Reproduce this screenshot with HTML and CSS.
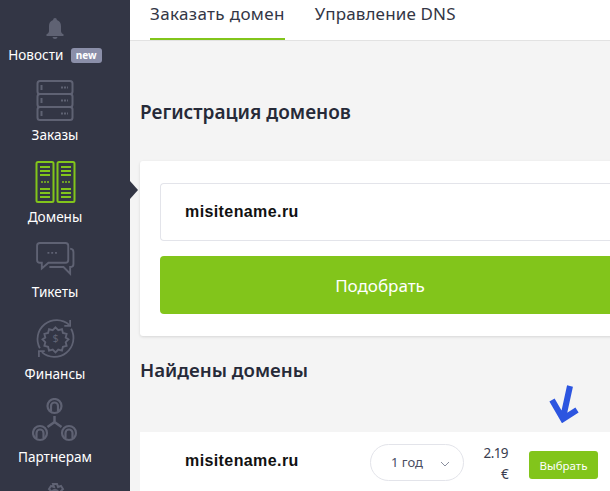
FILE: index.html
```html
<!DOCTYPE html>
<html lang="ru">
<head>
<meta charset="utf-8">
<title>Домены</title>
<link rel="stylesheet" href="styles.css">
</head>
<body>
<div class="app">
  <nav class="side">
    <a class="item news">
      <svg class="ic bell" width="18" height="21" viewBox="0 0 18 21"><path fill="#5f6273" d="M9 0c1.200 0 1.800.9 1.900 2C13.700 2.900 15 5.200 15 8v5c0 1.500 1 2.700 2.500 3.300V18H.5v-1.700C2 15.700 3 14.500 3 13V8c0-2.800 1.300-5.100 4.100-6C7.200.9 7.800 0 9 0z"/><path fill="#5f6273" d="M6.500 19h5C11.300 20.300 10.300 21 9 21s-2.300-.7-2.500-2z"/></svg>
      <span class="lab">Новости <em class="new">new</em></span>
    </a>
    <a class="item orders">
      <svg class="ic" width="38" height="41" viewBox="0 0 38 41" fill="none" stroke="#5f6273" stroke-width="2"><rect x="1.500" y="1" width="35" height="13" rx="2.500"/><rect x="1.500" y="14" width="35" height="13" rx="2.500"/><rect x="1.500" y="27" width="35" height="13" rx="2.500"/><path d="M5.500 5v5M5.500 18v5M5.500 31v5"/><path stroke-dasharray="2 1" d="M25 7.500h7M25 20.500h7M25 33.500h7"/></svg>
      <span class="lab">Заказы</span>
    </a>
    <a class="item dom">
      <svg class="ic" width="41" height="42" viewBox="0 0 41 42" fill="none" stroke="#82c51b" stroke-width="2"><rect x="1.500" y="1" width="17" height="40" rx="1.500"/><rect x="22.500" y="1" width="17" height="40" rx="1.500"/><path d="M5 6h10M5 10h10M5 14h10M26 6h10M26 10h10M26 14h10M5 28h10M5 32h10M5 36h10M26 28h10M26 32h10M26 36h10"/><path stroke-dasharray="2 1" stroke-width="1.500" d="M6 21h8M27 21h8"/></svg>
      <span class="lab">Домены</span>
    </a>
    <a class="item tick">
      <svg class="ic" width="41" height="34" viewBox="0 0 41 36" fill="none" stroke="#5f6273" stroke-width="2"><path d="M4 1h27a3 3 0 0 1 3 3v15a3 3 0 0 1-3 3H13l-7 6v-6H4a3 3 0 0 1-3-3V4a3 3 0 0 1 3-3z"/><path d="M36 7c2 .3 3.500 1.500 3.500 3.500v13c0 2-1.500 3-3.500 3v7l-7-7H14"/><path stroke-dasharray="2 2" d="M12 11.500h10"/></svg>
      <span class="lab">Тикеты</span>
    </a>
    <a class="item fin">
      <svg class="ic" width="41" height="41" viewBox="0 0 42 42" fill="none" stroke="#5f6273" stroke-width="1.800"><path d="M5 31A19.500 19.500 0 0 1 35 7"/><path d="M37 11A19.500 19.500 0 0 1 7 35"/><path d="M36 2v6h-6M4 40v-6h6"/><path d="M21 9l3 3 4-1 1 4 4 1-1 4 3 2-3 3 1 4-4 1-1 4-4-1-3 3-3-3-4 1-1-4-4-1 1-4-3-3 3-2-1-4 4-1 1-4 4 1z" stroke-width="2" transform="translate(1.050 1.050) scale(.95)"/><text x="21" y="25" text-anchor="middle" class="dollar">$</text></svg>
      <span class="lab">Финансы</span>
    </a>
    <a class="item part">
      <svg class="ic" width="46" height="44" viewBox="0 0 46 44" fill="none" stroke="#5f6273" stroke-width="2.200"><circle cx="22.500" cy="8" r="7"/><circle cx="8" cy="35" r="7"/><circle cx="37" cy="35" r="7"/><path d="M19 13V8a3.500 3.500 0 0 1 7 0v5M4.500 40v-5a3.500 3.500 0 0 1 7 0v5M33.500 40v-5a3.500 3.500 0 0 1 7 0v5"/><path stroke-width="2.500" d="M22.500 18v6l-7 5M22.500 24l7 5"/></svg>
      <span class="lab">Партнерам</span>
    </a>
    <a class="item gear">
      <svg class="ic" width="24" height="24" viewBox="0 0 24 24" fill="none" stroke="#5f6273" stroke-width="2"><circle cx="12" cy="12" r="4"/><path d="M10 2h4l1 3 3-1 2 3-2 2 1 3-3 1-1 3h-4l-1-3-3-1 1-3-2-2 2-3 3 1z"/></svg>
    </a>
    <span class="notch"></span>
  </nav>
  <main class="main">
    <header class="tabs">
      <a class="tab on">Заказать домен</a>
      <a class="tab dns">Управление DNS</a>
    </header>
    <section class="content">
      <h2 class="h reg">Регистрация доменов</h2>
      <div class="card">
        <div class="field">misitename.ru</div>
        <button class="go">Подобрать</button>
      </div>
      <h2 class="h found">Найдены домены</h2>
      <div class="row">
        <span class="dname">misitename.ru</span>
        <span class="sel">1 год<svg class="chev" width="10" height="6" viewBox="0 0 10 6" fill="none" stroke="#8a8f9e" stroke-width="1"><path d="M1 1l4 4 4-4"/></svg></span>
        <span class="price">2.19<br>€</span>
        <button class="pick">Выбрать</button>
        <svg class="arrow" width="30" height="38" viewBox="0 0 30 38" fill="none" stroke="#2c55e0" stroke-width="6"><path d="M21 1L14 33M3 15l11 19 14-9"/></svg>
      </div>
    </section>
  </main>
</div>
</body>
</html>
```

FILE: styles.css
```css
* { box-sizing: border-box; }
html, body { margin: 0; height: 100%; overflow: hidden; }
body { font-family: "Noto Sans", sans-serif; background: #f4f4f4; color: #262a38; }
.app { display: flex; width: 610px; height: 491px; overflow: hidden; }

.side { position: relative; flex: 0 0 130px; width: 130px; background: #333645; display: flex; flex-direction: column; align-items: flex-start; z-index: 2; }
.item { display: flex; flex-direction: column; align-items: center; width: 110px; flex: none; }
.ic { display: block; flex: none; }
.lab { color: #fff; font-size: 13.600px; line-height: 20px; white-space: nowrap; }
.news { margin-top: 18px; }
.news .lab { margin-top: 6px; font-size: 13.500px; }
.new { display: inline-block; font-style: normal; font-weight: 700; font-size: 10px; line-height: 15px; padding: 0 5px; margin-left: 4px; background: #8b8fa9; border-radius: 3px; color: #fff; vertical-align: 1px; }
.orders { margin-top: 15px; }
.orders .lab { margin-top: 4px; }
.dom { margin-top: 16px; }
.dom .lab { margin-top: 4px; }
.tick { margin-top: 15px; }
.tick .lab { margin-top: 6px; }
.fin { margin-top: 16px; }
.fin .lab { margin-top: 5px; }
.part { margin-top: 14px; }
.part .lab { margin-top: 5px; }
.gear { margin-top: 15px; }
.dollar { font: 400 11px "Noto Sans", sans-serif; fill: #5f6273; stroke: none; }
.notch { position: absolute; left: 130px; top: 181px; width: 0; height: 0; border-left: 8px solid #333645; border-top: 9px solid transparent; border-bottom: 9px solid transparent; }

.main { flex: 1; min-width: 0; display: flex; flex-direction: column; }
.tabs { height: 41px; flex: none; background: #fff; border-bottom: 1px solid #e2e2e2; display: flex; padding-left: 20px; gap: 30px; }
.tab { height: 40px; font-size: 17px; letter-spacing: .35px; line-height: 28px; color: #333645; white-space: nowrap; }
.tab.dns { letter-spacing: .15px; }
.tab.on { border-bottom: 2px solid #82c51b; }

.content { padding: 0 0 0 10px; width: 500px; }
.h { margin: 0; font-size: 18px; font-weight: 600; line-height: 24px; color: #262a38; }
.reg { margin-top: 59px; font-size: 19px; }
.found { font-size: 18.700px; }
.card { margin-top: 37px; width: 500px; height: 175px; background: #fff; border-radius: 3px 0 0 3px; box-shadow: 0 1px 3px rgba(0,0,0,.12); padding: 22px 0 0 20px; }
.field { height: 58px; border: 1px solid #e3e4ea; border-right: 0; border-radius: 4px 0 0 4px; font: 700 16px/56px "Liberation Sans", sans-serif; letter-spacing: .4px; color: #111; padding-left: 24px; }
.go { display: block; margin-top: 15px; width: 480px; height: 58px; border: 0; padding: 0 40px 0 0; background: #82c51b; border-radius: 4px 0 0 4px; color: #fff; font: 400 17px "Noto Sans", sans-serif; }
.found { margin-top: 22px; }
.row { position: relative; margin-top: 50px; height: 59px; width: 470px; background: #fff; display: flex; align-items: flex-start; }
.dname { margin: 20px 0 0 45px; width: 185px; font: 700 16px/18px "Liberation Sans", sans-serif; letter-spacing: .4px; color: #111; }
.sel { width: 94px; height: 37px; margin-top: 12px; border: 1px solid #e3e4ea; border-radius: 19px; font-size: 13px; line-height: 35px; padding-left: 20px; color: #4a4e63; position: relative; }
.chev { position: absolute; left: 69px; top: 16px; }
.price { width: 44px; margin-top: 11px; text-align: right; font-size: 13.500px; letter-spacing: -.6px; line-height: 21px; color: #3a3e50; }
.pick { margin: 19px 0 0 21px; width: 69px; height: 28px; border: 0; padding: 0; background: #82c51b; border-radius: 3px; color: #fff; font: 400 11.500px "Noto Sans", sans-serif; }
.arrow { position: absolute; left: 409px; top: -47px; }
```
